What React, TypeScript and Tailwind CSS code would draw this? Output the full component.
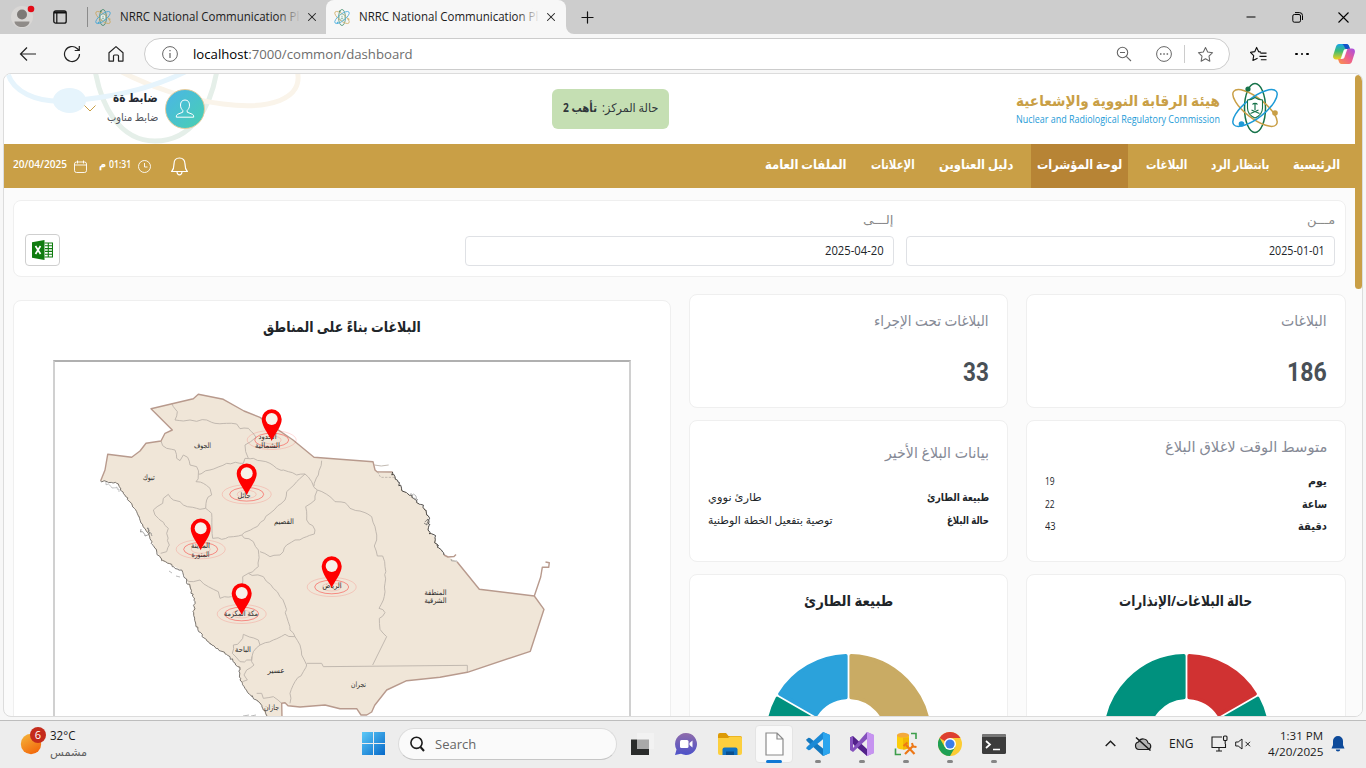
import { useLayoutEffect, useRef, type ReactNode } from "react";
import { Minus, X, Plus } from "lucide-react";

/* Text squeezed or stretched horizontally to the width of its box. */
function Fit({ className, children, rtl = true }: { className: string; children: ReactNode; rtl?: boolean }) {
  const box = useRef<HTMLSpanElement>(null);
  const inner = useRef<HTMLSpanElement>(null);
  useLayoutEffect(() => {
    if (box.current && inner.current) {
      inner.current.style.transform = `scaleX(${box.current.offsetWidth / inner.current.offsetWidth})`;
    }
  }, []);
  return (
    <span ref={box} dir={rtl ? "rtl" : "ltr"} className={`block shrink-0 whitespace-nowrap ${className}`}>
      <span ref={inner} className={rtl ? "inline-block origin-right" : "inline-block origin-left"}>
        {children}
      </span>
    </span>
  );
}

function Atom({ className, thick = false }: { className: string; thick?: boolean }) {
  const w = thick ? 2.6 : 1.5;
  return (
    <svg viewBox="0 0 48 52" className={className} fill="none">
      <ellipse cx="24" cy="26" rx="10.5" ry="24.5" stroke="#17734a" strokeWidth={w} />
      <ellipse cx="24" cy="26" rx="27" ry="10" transform="rotate(38 24 26)" stroke="#c99f46" strokeWidth={w} />
      <ellipse cx="24" cy="26" rx="27" ry="10" transform="rotate(-38 24 26)" stroke="#1e9bd7" strokeWidth={w} />
      <path d="M24 15.500c2.500 1.800 5 2.500 7.500 2.500v8c0 5-3 8-7.500 10-4.500-2-7.500-5-7.500-10v-8c2.500 0 5-.7 7.500-2.500Z" fill="#fff" stroke="#17734a" strokeWidth="1.100" />
      <path d="M24 21v7M21.500 22.500c1-1.500 4-1.500 5 0M19.500 31.500l8-3.500M28.500 31.500l-8-3.500" stroke="#17734a" strokeWidth="1.200" />
      <circle cx="17" cy="7" r="2.600" fill="#17734a" />
      <circle cx="44" cy="31" r="2.800" fill="#c99f46" />
      <circle cx="10.500" cy="42" r="2.800" fill="#1e9bd7" />
    </svg>
  );
}

function TabTitle({ active = false }: { active?: boolean }) {
  return (
    <span className="relative h-5 w-[181px] shrink-0 overflow-hidden text-[12px] leading-5 text-[#1b1b1b]">
      <Fit rtl={false} className="w-[179px]">NRRC National Communication Pl</Fit>
      <span className={`absolute inset-y-0 right-0 w-6 bg-gradient-to-r from-transparent ${active ? "to-[#f7f7f7]" : "to-[#cdcdcd]"}`} />
    </span>
  );
}

function TabBar() {
  return (
    <div className="flex h-[34px] bg-[#cdcdcd]">
      <div className="flex w-[87px] items-center">
        <div className="ml-[11px] grid h-[22px] w-[22px] place-items-center rounded-full bg-[#d9d7d5]">
          <svg viewBox="0 0 22 22" className="h-[22px] w-[22px] overflow-visible">
            <circle cx="11" cy="8.500" r="5" fill="#7d7976" />
            <path d="M3.500 15.500h15c0 3.500-3.500 5.500-7.500 5.500s-7.500-2-7.500-5.500Z" fill="#8f8b88" />
            <circle cx="20" cy="3" r="3.300" fill="#e30b17" />
          </svg>
        </div>
        <svg viewBox="0 0 14 14" className="ml-5 h-[14px] w-[14px]" fill="none" stroke="#111" strokeWidth="1.300">
          <rect x=".8" y=".8" width="12.400" height="12.400" rx="2" />
          <path d="M1 2.400h12" strokeWidth="2.200" />
          <path d="M3.800 3v10" strokeWidth="1.200" />
        </svg>
      </div>
      <div className="flex w-[239px] items-center">
        <div className="h-5 w-px bg-[#8b8b8b]" />
        <Atom thick className="ml-[7px] h-[17px] w-4 opacity-75" />
        <div className="w-[9px]" />
        <TabTitle />
        <X className="ml-[4px] h-[14px] w-[14px] text-[#222]" strokeWidth={1.8} />
      </div>
      <div className="flex w-[240px] items-center rounded-t-lg bg-[#f7f7f7]">
        <Atom thick className="ml-2 h-[17px] w-4 opacity-75" />
        <div className="w-[9px]" />
        <TabTitle active />
        <X className="ml-[4px] h-[14px] w-[14px] text-[#222]" strokeWidth={1.8} />
      </div>
      <div className="flex flex-1 items-center bg-[#f7f7f7]">
        <div className="flex h-full flex-1 items-center rounded-bl-lg bg-[#cdcdcd] pl-[12px]">
          <Plus className="h-[19px] w-[19px] text-[#111]" strokeWidth={1.5} />
          <div className="flex-1" />
          <div className="flex w-[46px] justify-center"><Minus className="h-[14px] w-[14px] text-black" strokeWidth={1.7} /></div>
          <div className="flex w-[46px] justify-center">
            <svg viewBox="0 0 11 11" className="h-[11px] w-[11px]" fill="none" stroke="#000" strokeWidth="1">
              <rect x=".8" y="2.500" width="7.700" height="7.700" rx="1.500" />
              <path d="M3 .6h4.500a3 3 0 0 1 3 3V8" />
            </svg>
          </div>
          <div className="flex w-[46px] justify-center">
            <svg viewBox="0 0 11 11" className="h-[11px] w-[11px]" stroke="#000" strokeWidth="1.100"><path d="M.5.500l10 10M10.500.500l-10 10" /></svg>
          </div>
        </div>
      </div>
    </div>
  );
}

const STAR = "M9 1.500l2.300 4.900 5.200.7-3.800 3.700.9 5.300L9 13.500l-4.600 2.600.9-5.300L1.500 7.100l5.200-.7L9 1.500Z";

function Toolbar() {
  return (
    <div className="flex h-[39px] items-center bg-[#f7f7f7] pr-[2px] pl-[6px] pt-[1px]">
      <div className="flex w-11 justify-center">
        <svg viewBox="0 0 18 18" className="h-[18px] w-[18px]" fill="none" stroke="#222" strokeWidth="1.200"><path d="M17 9H1.500M8 2.500 1.500 9 8 15.500" /></svg>
      </div>
      <div className="flex w-11 justify-center">
        <svg viewBox="0 0 18 18" className="h-[18px] w-[18px]" fill="none" stroke="#222" strokeWidth="1.200"><path d="M16.500 9a7.500 7.500 0 1 1-2.400-5.500l1.900 1.800M16.300 1v4.500h-4.600" /></svg>
      </div>
      <div className="flex w-11 justify-center">
        <svg viewBox="0 0 18 18" className="h-[18px] w-[18px]" fill="none" stroke="#222" strokeWidth="1.200" strokeLinejoin="round"><path d="M2 7.800 9 1.600l7 6.200v8.300h-4.500V11a1 1 0 0 0-1-1h-3a1 1 0 0 0-1 1v5.100H2Z" /></svg>
      </div>
      <div className="mx-[6px] flex h-8 flex-1 items-center rounded-full border border-[#cccccc] bg-white pr-[15px] pl-[17px]">
        <svg viewBox="0 0 16 16" className="h-4 w-4" fill="none" stroke="#666" strokeWidth="1"><circle cx="8" cy="8" r="7.400" /><path d="M8 7v5M8 4v1.300" strokeWidth="1.200" /></svg>
        <Fit rtl={false} className="ml-[15px] w-[220px] text-[13px] leading-5 text-[#6d6d6d]"><span className="text-black">localhost</span>:7000/common/dashboard</Fit>
        <div className="flex-1" />
        <svg viewBox="0 0 16 16" className="h-4 w-4" fill="none" stroke="#666" strokeWidth="1.100"><circle cx="6.500" cy="6.500" r="5.200" /><path d="M4 6.500h5M10.300 10.300 15 15" /></svg>
        <svg viewBox="0 0 16 16" className="ml-6 h-4 w-4" fill="none" stroke="#666" strokeWidth="1"><circle cx="8" cy="8" r="7.400" /><path d="M4 8h1.500M7.300 8h1.500M10.600 8h1.500" strokeWidth="1.500" /></svg>
        <div className="mx-3 h-[18px] w-px bg-[#ccc]" />
        <svg viewBox="0 0 18 18" className="h-[17px] w-[17px]" fill="none" stroke="#666" strokeWidth="1.100" strokeLinejoin="round"><path d={STAR} /></svg>
      </div>
      <div className="flex w-11 justify-center">
        <svg viewBox="0 0 18 18" className="h-[17px] w-[17px]" fill="none" stroke="#111" strokeWidth="1.200" strokeLinejoin="round"><path d="M11.500 6.500 9.200 6 7 1.500 5 6l-4.500.8 3.400 3.500-.8 5L8 12.900M11 7.500h6.500M10 11h7.500M11.500 14.500h6" /></svg>
      </div>
      <div className="flex w-11 justify-center gap-[3px]">
        <i className="h-[2.500px] w-[2.500px] rounded-full bg-black" /><i className="h-[2.500px] w-[2.500px] rounded-full bg-black" /><i className="h-[2.500px] w-[2.500px] rounded-full bg-black" />
      </div>
      <div className="flex w-10 justify-center">
        <svg viewBox="0 0 22 20" className="h-5 w-[22px]">
          <defs>
            <linearGradient id="cpA" x1="0" y1="0" x2="0" y2="1"><stop offset="0" stopColor="#19a5ea" /><stop offset=".45" stopColor="#3cbc74" /><stop offset="1" stopColor="#f4cf1c" /></linearGradient>
            <linearGradient id="cpB" x1="1" y1="0" x2="0" y2="1"><stop offset="0" stopColor="#a44fe8" /><stop offset=".5" stopColor="#ee5f8c" /><stop offset="1" stopColor="#fb9646" /></linearGradient>
          </defs>
          <path d="M6 0h7.500c1.500 0 2.200 1 2.700 2.500L17 5h-4c-1.500 0-2.200.7-2.700 2.200L8 14c-.4 1-1 1.500-2 1.500H3C.5 15.500-.4 13.500.3 11L3 2.500C3.500 1 4.500 0 6 0Z" fill="url(#cpA)" />
          <path d="M9 0h4.500c1.500 0 2.200 1 2.700 2.500L17 5h-4C11.500 4.500 11 0 9 0Z" fill="#1552c8" />
          <path d="M16 20H8.500C7 20 6.300 19 5.800 17.500L5 15h4c1.500 0 2.200-.7 2.700-2.200L14 6c.4-1 1-1.500 2-1.500h3c2.500 0 3.400 2 2.700 4.500L19 17.500c-.5 1.500-1.500 2.500-3 2.500Z" fill="url(#cpB)" />
          <path d="m12.200 6-2.700 8" stroke="#fff" strokeWidth="1.200" />
        </svg>
      </div>
    </div>
  );
}

function Header() {
  return (
    <header className="relative flex h-[70px] shrink-0 items-start overflow-hidden bg-white">
      <svg viewBox="4 74 310 70" className="absolute top-0 left-0 h-[70px] w-[310px]" fill="none">
        <path d="M95 70c6 35 24 71 60 71 38 0 56-35 62-71" stroke="#e5efe9" strokeWidth="5" />
        <path d="M118 70c30 16 70 30 105 34 45 6 82-4 74-34" stroke="#faf4ea" strokeWidth="5" />
        <path d="M7 70c4 22 30 33 60 31 45-3 85-12 122-31" stroke="#e6f4fc" strokeWidth="5" />
        <ellipse cx="69.500" cy="100.500" rx="16.500" ry="12.500" fill="#e6f4fc" />
      </svg>
      <div className="relative flex w-full items-start">
        <svg viewBox="0 0 12 7" className="mt-[31px] ml-20 h-[7px] w-3" fill="none" stroke="#c99f46"><path d="m.5.500 5.500 5.500L11.500.500" /></svg>
        <div className="mt-[15px] ml-[7px] flex w-[55px] flex-col items-end">
          <Fit className="w-[45px] text-[12px] leading-[18px] font-bold text-[#262a33]">ضابط ةة</Fit>
          <Fit className="w-[51px] text-[11px] leading-[20px] text-[#50545c]">ضابط مناوب</Fit>
        </div>
        <div className="mt-[15px] ml-[7px] grid h-[40px] w-[40px] place-items-center rounded-full border border-[#e0cb9d] bg-gradient-to-br from-[#4cb5e6] to-[#49cfb0]">
          <svg viewBox="0 0 20 20" className="h-5 w-5" fill="none" stroke="#fff" strokeWidth="1"><path d="M10 1c3 0 4.500 2.200 4.500 5s-1 4-2.300 5.400v1.800l5 2c1 .4 1.500 1.200 1.500 3H1.300c0-1.800.5-2.600 1.500-3l5-2v-1.800C6.500 10 5.500 8.800 5.500 6S7 1 10 1Z" /></svg>
        </div>
        <div className="mt-[15px] ml-[347px] flex h-10 w-[117px] items-center justify-center gap-[5px] rounded-md bg-[#c5dfb3] pb-[2px] text-[12px] leading-5 text-[#30363a]" dir="rtl">
          <Fit className="w-[56px]">حالة المركز:</Fit>
          <Fit className="w-[34px] font-bold">تأهب 2</Fit>
        </div>
        <div className="mt-[13px] ml-[347px]">
          <Fit className="w-[204px] text-[15px] leading-[26px] font-bold text-[#c99f46]">هيئة الرقابة النووية والإشعاعية</Fit>
          <Fit rtl={false} className="w-[204px] text-[10px] leading-[12px] text-[#1e9bd7]">Nuclear and Radiological Regulatory Commission</Fit>
        </div>
        <Atom className="mt-2 ml-[11px] h-[52px] w-12 shrink-0" />
      </div>
    </header>
  );
}

function Nav() {
  const item = "flex h-full items-center px-[6px] pb-[5px]";
  return (
    <nav dir="rtl" className="flex h-11 shrink-0 items-center gap-3 bg-[#c99f46] pr-[9px] pl-[9px] text-[13px] leading-6 font-semibold text-white">
      <a className={item}><Fit className="w-[47px]">الرئيسية</Fit></a>
      <a className={item}><Fit className="w-[58px]">بانتظار الرد</Fit></a>
      <a className={item}><Fit className="w-[41px]">البلاغات</Fit></a>
      <a className={`${item} bg-[#b78435]`}><Fit className="w-[85px]">لوحة المؤشرات</Fit></a>
      <a className={item}><Fit className="w-[74px]">دليل العناوين</Fit></a>
      <a className={item}><Fit className="w-[44px]">الإعلانات</Fit></a>
      <a className={item}><Fit className="w-[82px]">الملفات العامة</Fit></a>
      <div className="flex-1" />
      <div dir="ltr" className="flex items-center text-[11px] leading-5">
        <Fit rtl={false} className="mb-1 w-[54px]">20/04/2025</Fit>
        <svg viewBox="0 0 13 13" className="ml-[7px] h-[13px] w-[13px]" fill="none" stroke="#fff" strokeWidth=".9"><rect x=".5" y="2" width="12" height="10.500" rx="2" /><path d="M.5 5h12M3.500.500v3M9.500.500v3" /></svg>
        <span className="mb-1 ml-3 flex items-center gap-[3px]">
          <Fit className="w-[7px]">م</Fit>
          <Fit rtl={false} className="w-[22px]">01:31</Fit>
        </span>
        <svg viewBox="0 0 13 13" className="ml-[7px] h-[13px] w-[13px]" fill="none" stroke="#fff" strokeWidth=".9"><circle cx="6.500" cy="6.500" r="6" /><path d="M6.500 3v4H9.500" /></svg>
        <svg viewBox="0 0 17 19" className="ml-[20px] h-[19px] w-[17px]" fill="none" stroke="#fff" strokeWidth="1.200"><path d="M8.500 1C5 1 3 3.500 3 7c0 4-.5 5.500-2.300 7.500h15.600C14.500 12.500 14 11 14 7c0-3.500-2-6-5.500-6ZM6 15c.2 1.800 1 2.800 2.500 2.800S10.800 16.800 11 15" /></svg>
      </div>
    </nav>
  );
}

function Filters() {
  return (
    <section dir="rtl" className="mx-[9px] mt-3 flex h-[77px] shrink-0 rounded-lg border border-[#efefef] bg-white px-[10px] text-[12px]">
      <div className="mt-[9px]">
        <Fit className="w-7 leading-5 text-[#8a8a8a]">مـــن</Fit>
        <div className="mt-[6px] flex h-[30px] w-[429px] items-center rounded-[4px] border border-[#dfe1e5] px-[9px] pb-[1px] text-[#212529]">
          <Fit rtl={false} className="w-[56px]">2025-01-01</Fit>
        </div>
      </div>
      <div className="mt-[9px] mr-3">
        <Fit className="w-[31px] leading-5 text-[#8a8a8a]">إلـــى</Fit>
        <div className="mt-[6px] flex h-[30px] w-[429px] items-center rounded-[4px] border border-[#dfe1e5] px-[9px] pb-[1px] text-[#212529]">
          <Fit rtl={false} className="w-[59px]">2025-04-20</Fit>
        </div>
      </div>
      <div className="flex-1" />
      <button className="mt-[33px] ml-[1px] grid h-8 w-[35px] place-items-center rounded-[4px] border border-[#cfcfcf] bg-white">
        <svg viewBox="0 0 21 20" className="h-5 w-[21px]">
          <path d="M0 2.200 12.500 0v20L0 17.800Z" fill="#107c10" />
          <path d="m3.500 6 5 8M8.500 6l-5 8" stroke="#fff" strokeWidth="1.700" />
          <path d="M12.500 3h8v14h-8M13 5.800h7M13 8.600h7M13 11.400h7M13 14.200h7M16.300 3v14" fill="none" stroke="#107c10" strokeWidth="1.100" />
        </svg>
      </button>
    </section>
  );
}

type Pt = [number, number];

function rough(src: string, amp: number, step = 14) {
  const pts: Pt[] = src.split(" ").map((p) => p.split(",").map(Number) as Pt);
  let seed = 7;
  const rnd = () => {
    seed = (seed * 16807) % 2147483647;
    return seed / 2147483647 - 0.5;
  };
  let d = `M${pts[0][0]} ${pts[0][1]}`;
  for (let i = 1; i < pts.length; i++) {
    const [ax, ay] = pts[i - 1];
    const [bx, by] = pts[i];
    const n = Math.max(1, Math.round(Math.hypot(bx - ax, by - ay) / step));
    for (let k = 1; k <= n; k++) {
      const t = k / n;
      const j = k === n ? 0 : amp;
      d += `L${(ax + (bx - ax) * t + rnd() * j).toFixed(1)} ${(ay + (by - ay) * t + rnd() * j).toFixed(1)}`;
    }
  }
  return d;
}

const LAND =
  "M198.300 394.300 223.300 399.300 244 411 260 417.300 293 440 314 457.300 340 459.300 373 461.700 375 470 377 471.700 392.700 472 395 476.700 401.700 490 410 495 416.700 502 426 510 428.700 520 428 530 435 537.700 436.700 545 444 555 448 557 457 561.700 479.300 589.300 534.300 596 544 609.300 530.300 651.300 467.300 672.300 440 677.300 406.700 680.700 386.700 690 374.700 705.300 371.700 712 366.700 715 361 715 356.700 708.700 340 708.700 325 705 300 707 288 705.700 285 702.700 281.700 703.300 282 718 267 718 263.300 710 260 703 248 693 240 680 240 670 235 663 230 656.700 213 645.700 206.700 640.700 196 626.700 193 611.700 195 601.700 186.700 580 181.700 570 161.700 560.700 155 548.300 146.700 531.700 143 526.700 136.700 511.700 123.300 493.300 116.700 483.300 100.700 480.700 105 470 107.700 454.300 131.700 457.300 140 451 146 443.300 161 441 165 433.300 172.300 430 151 408.700 193.300 398.700Z";

const NORTH = [
  "395,190 400,200 412,215 405,240 430,243 450,240 470,244 500,240 525,250 560,250 590,252 600,266 625,265 640,280 648,292 632,305 615,315 617,335 625,355",
  "363,303 380,325 405,330 410,355 420,362 430,345 443,352 450,375 470,380 475,403 468,425 490,430 510,445 515,465 500,480 497,505 515,520 518,595",
  "475,403 510,390 560,370 610,370 615,355 640,355 660,362 690,370 710,385 745,395 770,405 795,402 815,425 822,442 832,450 870,470 885,485 915,488 930,505 960,513",
  "822,438 835,405 845,362",
  "795,402 770,425 740,455 735,480 690,520 640,565 605,585 580,590 545,598 518,595",
  "497,505 470,505 430,495 420,485 400,480 385,463 370,475 368,490 340,510 345,525 360,540 385,565 380,580 388,615 380,635 362,640",
  "832,450 825,480 797,500 800,540 825,570 823,582 800,590 765,600 740,615 720,645 690,650 660,635",
];
const SOUTH = [
  "605,15 640,35 655,60 655,110 625,130 608,140 607,165",
  "625,130 670,140 700,175 720,200 735,225 740,260 750,300 765,320 780,345 785,375 800,405 790,425 765,455 750,490 750,520",
  "440,148 460,155 480,150 505,170 535,185 540,205 575,200",
  "765,320 735,313 700,330 660,345 655,330 610,313 600,335 580,345 577,370 600,395 635,390 640,365 660,345",
  "635,380 642,405 620,420 612,435 622,450 607,455",
  "650,490 665,490 670,505 700,500 725,520",
];
const EAST =
  "960,513 975,518 995,530 1005,560 1010,600 1003,618 1012,648 1028,648 1035,680 1035,730 1030,780 1017,805 1035,818 1018,835 1020,868 1040,890";

const WEST_COAST =
  "100.7,480.7 116.7,483.3 123.3,493.3 136.7,511.7 143,526.7 146.7,531.7 155,548.3 161.7,560.7 181.7,570 186.7,580 195,601.7 193,611.7 196,626.7 206.7,640.7 213,645.7 230,656.7 235,663 240,670 240,680 248,693 260,703 263.3,710 267,716";
const EAST_COAST =
  "392.7,472 395,476.7 401.7,490 410,495 416.7,502 426,510 428.7,520 428,530 435,537.7 436.7,545 444,555";
const LAND_BORDER =
  "M100.700 480.700 105 470 107.700 454.300 131.700 457.300 140 451 146 443.300 161 441 165 433.300 172.300 430 151 408.700 193.300 398.700 198.300 394.300 223.300 399.300 244 411 260 417.300 293 440 314 457.300 340 459.300 373 461.700 375 470 377 471.700 392.700 472M444 555 448 557 454 556.500 456 554.500M457 561.700 479.300 589.300 534.300 596 544 609.300 530.300 651.300 467.300 672.300 440 677.300 406.700 680.700 386.700 690 374.700 705.300 371.700 712 366.700 715 361 715 356.700 708.700 340 708.700 325 705 300 707 288 705.700 285 702.700 281.700 703.300 282 718M534.300 596 540.700 577 542.300 567.300 548.700 567.300 549.300 562.700 545.500 562";

const LABELS: [string, number, number, number][] = [
  ["الجوف", 202.500, 447.500, 17],
  ["تبوك", 148.700, 479.500, 12],
  ["القصيم", 284, 523.500, 20],
  ["حائل", 244, 497.500, 13],
  ["الحدود", 267.500, 438.500, 18],
  ["الشمالية", 267.500, 447.500, 25],
  ["المدينة", 200.500, 548, 19],
  ["المنورة", 200.500, 556.500, 18],
  ["الرياض", 332, 588, 19],
  ["مكة المكرمة", 241, 615.500, 34],
  ["الباحة", 243, 651.500, 16],
  ["عسير", 276, 672.500, 17],
  ["جازان", 271.500, 709.500, 15],
  ["نجران", 358.500, 687, 15],
  ["المنطقة", 435.500, 595, 22],
  ["الشرقية", 435.500, 603, 22],
];

const PINS: Pt[] = [[271.700, 440], [246.700, 494.300], [200.700, 549.300], [331.700, 587], [241.700, 614]];

function RegionsMap() {
  return (
    <svg viewBox="55 362 574 355" className="h-[355px] w-[574px]" fill="none">
      <path d={LAND} fill="#f0e6d8" />
      <g stroke="#bdb5ac" strokeWidth="2.800" transform="translate(40 340) scale(.33333)">
        {NORTH.map((s, i) => <path key={i} d={rough(s, 7)} />)}
        <g transform="translate(0 570)">{SOUTH.map((s, i) => <path key={i} d={rough(s, 7)} />)}</g>
        <path d="M800 970H845L850 980 1282 976V997" />
        <path d={rough(EAST, 6)} />
        <path d="M1040 890 998 975" />
        <path d="M1012 395 1022 412H1065" strokeDasharray="7 4" />
        <path d="M1003 375q20 6 43 0" />
      </g>
      <path d={LAND_BORDER} stroke="#b89a8d" strokeWidth="1.400" strokeLinejoin="round" />
      <path d={rough(WEST_COAST, 2.4, 2)} stroke="#6d6862" strokeWidth=".9" />
      <path d={rough(EAST_COAST, 3.4, 1.800)} stroke="#4a4642" strokeWidth="1" />
      <path d={rough("106,482 112,488 117,487 119,492", 3, 2)} stroke="#aaa" strokeWidth=".7" />
      <path d={rough("141,529 145,536 150,533 147,528 152,536", 3, 2)} stroke="#777" strokeWidth=".7" />
      <path d="M169 571l3 2M176 576l4 1M243 716l6-1M251 716l5-1" stroke="#bbb" />
      <path d={rough("411,493 416,496 418,500 414,498", 3, 2)} stroke="#999" strokeWidth=".7" />
      <path d={rough("425,522 428,519 427,525 424,523", 2, 2)} stroke="#555" strokeWidth=".7" />
      <path d={rough("451,559 454,561 457,561", 2, 2)} stroke="#888" strokeWidth=".7" />
      {PINS.map(([x, y]) => (
        <g key={x} fill="none">
          <ellipse cx={x} cy={y} rx="24.500" ry="9.500" stroke="#ff0000" strokeOpacity=".14" />
          <ellipse cx={x} cy={y} rx="17" ry="6.800" stroke="#ff0000" strokeOpacity=".4" />
          <ellipse cx={x} cy={y} rx="9.500" ry="4" stroke="#ff0000" strokeOpacity=".14" />
        </g>
      ))}
      <g fill="#2b2b2b" fontSize="7.500" textAnchor="middle" direction="rtl" className="font-['DejaVu_Sans',sans-serif]">
        {LABELS.map(([t, x, y, w]) => <text key={t} x={x} y={y} textLength={w} lengthAdjust="spacingAndGlyphs">{t}</text>)}
      </g>
      {PINS.map(([x, y]) => (
        <g key={x} transform={`translate(${x} ${y})`}>
          <path d="M0 1C-2.500-5.500-10-13.500-10-20.800a10 10 0 0 1 20 0C10-13.500 2.500-5.500 0 1Z" fill="#f00" />
          <circle cy="-21" r="6" fill="#f7f1e9" />
        </g>
      ))}
    </svg>
  );
}

function sector(from: number, to: number) {
  const R = 82.200;
  const r = 39.800;
  const gap = 2.700;
  const at = (rad: number, deg: number, side: number) => {
    const a = (deg * Math.PI) / 180 + side * Math.asin(gap / rad);
    return `${(84 + rad * Math.sin(a)).toFixed(2)} ${(84 - rad * Math.cos(a)).toFixed(2)}`;
  };
  const big = to - from > 180 ? 1 : 0;
  return `M${at(R, from, 1)}A${R} ${R} 0 ${big} 1 ${at(R, to, -1)}L${at(r, to, -1)}A${r} ${r} 0 ${big} 0 ${at(r, from, 1)}Z`;
}

function Donut({ slices }: { slices: [number, number, string][] }) {
  return (
    <svg viewBox="0 0 168 168" className="h-[165px] w-[165px] shrink-0">
      {slices.map(([a, b, c]) => <path key={a} d={sector(a, b)} fill={c} stroke={c} strokeWidth="3.600" strokeLinejoin="round" />)}
    </svg>
  );
}

const CARD = "rounded-lg border border-[#efefef] bg-white";
const CARD_TITLE = "text-[15px] leading-6 text-[#868a96]";

function Row({ label, value }: { label: ReactNode; value: ReactNode }) {
  return <div className="flex h-[22.500px] items-center justify-between text-[11px] leading-5 text-[#212529]">{label}{value}</div>;
}

function Dashboard() {
  return (
    <main dir="rtl" className="flex min-h-0 flex-1 items-start overflow-hidden px-[9px] pt-[17px]">
      <div className="flex w-[320px] shrink-0 flex-col gap-3">
        <div className={`${CARD} h-[114px] px-[18px] pt-[13px]`}>
          <Fit className={`w-[46px] ${CARD_TITLE}`}>البلاغات</Fit>
          <Fit className="mt-[20px] w-[40px] font-['Roboto',sans-serif] text-[26px] leading-10 font-bold text-[#495057]">186</Fit>
        </div>
        <div className={`${CARD} h-[142px] px-[18px] pt-[13px]`}>
          <Fit className={`mb-[12px] w-[162px] ${CARD_TITLE}`}>متوسط الوقت لاغلاق البلاغ</Fit>
          <Row label={<Fit className="w-[19px] font-bold">يوم</Fit>} value={<Fit rtl={false} className="w-[10px]">19</Fit>} />
          <Row label={<Fit className="w-[25px] font-bold">ساعة</Fit>} value={<Fit rtl={false} className="w-[10px]">22</Fit>} />
          <Row label={<Fit className="w-[29px] font-bold">دقيقة</Fit>} value={<Fit rtl={false} className="w-[11px]">43</Fit>} />
        </div>
        <div className={`${CARD} flex h-[300px] flex-col items-center pt-[13px]`}>
          <Fit className="w-[133px] text-[15px] leading-6 font-bold text-[#212529]">حالة البلاغات/الإنذارات</Fit>
          <div className="mt-[41.500px]"><Donut slices={[[0, 60, "#d03232"], [60, 180, "#00917e"], [180, 360, "#00917e"]]} /></div>
        </div>
      </div>
      <div className="mr-[18px] flex w-[319px] shrink-0 flex-col gap-3">
        <div className={`${CARD} h-[114px] px-[18px] pt-[13px]`}>
          <Fit className={`w-[115px] ${CARD_TITLE}`}>البلاغات تحت الإجراء</Fit>
          <Fit className="mt-[20px] w-[26px] font-['Roboto',sans-serif] text-[26px] leading-10 font-bold text-[#495057]">33</Fit>
        </div>
        <div className={`${CARD} h-[142px] px-[18px] pt-[19px]`}>
          <Fit className={`mb-[22px] w-[104px] ${CARD_TITLE}`}>بيانات البلاغ الأخير</Fit>
          <Row label={<Fit className="w-[62px] font-bold">طبيعة الطارئ</Fit>} value={<Fit className="w-[54px]">طارئ نووي</Fit>} />
          <Row label={<Fit className="w-[42px] font-bold">حالة البلاغ</Fit>} value={<Fit className="w-[125px]">توصية بتفعيل الخطة الوطنية</Fit>} />
        </div>
        <div className={`${CARD} flex h-[300px] flex-col items-center pt-[13px]`}>
          <Fit className="w-[89px] text-[15px] leading-6 font-bold text-[#212529]">طبيعة الطارئ</Fit>
          <div className="mt-[41.500px] mr-px"><Donut slices={[[0, 180, "#c9ab64"], [180, 300, "#00917e"], [300, 360, "#2ba2db"]]} /></div>
        </div>
      </div>
      <div className={`${CARD} mt-[6px] mr-[18px] flex h-[600px] w-[658px] shrink-0 flex-col items-center pt-[13px]`}>
        <Fit className="w-[158px] text-[15px] leading-6 font-bold text-[#212529]">البلاغات بناءً على المناطق</Fit>
        <div className="mt-[22px] w-[578px] border-x-2 border-t-2 border-x-[#d0d0d0] border-t-[#b0b0b0]">
          <RegionsMap />
        </div>
      </div>
    </main>
  );
}

function Running() {
  return <i className="absolute bottom-[3px] left-1/2 h-[3px] w-[6px] -translate-x-1/2 rounded-full bg-[#868686]" />;
}

function Taskbar() {
  const slot = "relative flex h-full w-11 shrink-0 items-center justify-center";
  return (
    <footer className="flex h-12 items-center border-t border-[#bdbdbd] bg-[#ededed] pb-[2px]">
      <div className="flex w-[352px] items-center pl-5">
        <svg viewBox="0 0 26 28" className="h-7 w-[26px] overflow-visible">
          <defs><linearGradient id="sun" x1="0" y1="0" x2=".6" y2="1"><stop stopColor="#f5b83d" /><stop offset="1" stopColor="#f26a0c" /></linearGradient></defs>
          <circle cx="11" cy="14" r="10.200" fill="url(#sun)" />
          <circle cx="18" cy="5" r="8" fill="#c42b1c" />
          <text x="18" y="9" textAnchor="middle" fontSize="11" fill="#fff">6</text>
        </svg>
        <div className="ml-1 text-[12px] text-[#1b1b1b]">
          <Fit rtl={false} className="w-[25px] leading-4">32°C</Fit>
          <Fit className="w-[37px] text-[11px] leading-4 text-[#5f5f5f]">مشمس</Fit>
        </div>
      </div>
      <div className="flex w-[47px] justify-center pr-[4px]">
        <svg viewBox="0 0 23 23" className="h-[23px] w-[23px]">
          <defs><linearGradient id="win" x1="0" y1="0" x2="1" y2="1"><stop stopColor="#5cc9f7" /><stop offset="1" stopColor="#0669c9" /></linearGradient></defs>
          <path d="M0 0h11v11H0ZM12 0h11v11H12ZM0 12h11v11H0ZM12 12h11v11H12Z" fill="url(#win)" />
        </svg>
      </div>
      <div className="mr-[3px] -ml-px flex h-8 w-[219px] items-center rounded-full border border-[#dcdcdc] border-b-[#c6c6c6] bg-[#fafafa] pl-[10px]">
        <svg viewBox="0 0 16 16" className="h-4 w-4" fill="none" stroke="#1b1b1b" strokeWidth="1.600"><circle cx="7.500" cy="6.800" r="5.600" /><path d="m11.500 11 3.500 4" strokeWidth="2" /></svg>
        <Fit rtl={false} className="ml-[10px] w-[41px] text-[13px] leading-5 text-[#666]">Search</Fit>
      </div>
      <div className={slot}>
        <svg viewBox="0 0 24 24" className="h-6 w-6"><path d="M1 7.500h18V23H1Z" fill="#2a2c2b" /><path d="M7 1h17v16H7Z" fill="#f2f2f2" /><path d="M7 7.500h12V17H7Z" fill="#a9a9a9" /></svg>
      </div>
      <div className={slot}>
        <svg viewBox="0 0 24 24" className="h-6 w-6">
          <defs><linearGradient id="chat" x1="0" y1="0" x2="0" y2="1"><stop stopColor="#8f6cab" /><stop offset="1" stopColor="#4d52c9" /></linearGradient></defs>
          <path d="M12 1a11 11 0 1 1-5 20.800L1 23l1.500-5.500A11 11 0 0 1 12 1Z" fill="url(#chat)" />
          <rect x="6" y="8" width="8.500" height="8" rx="1.500" fill="#fff" /><path d="m15.500 11 3-2.500v7l-3-2.500Z" fill="#fff" />
        </svg>
      </div>
      <div className={slot}>
        <svg viewBox="0 0 24 22" className="h-[22px] w-6"><path d="M0 2a2 2 0 0 1 2-2h6l2.500 3H22a2 2 0 0 1 2 2v3H0Z" fill="#dd9a06" /><path d="M0 5h10l2-1.500h10a2 2 0 0 1 2 2V20a2 2 0 0 1-2 2H2a2 2 0 0 1-2-2Z" fill="#fccf3e" /><path d="M4.500 22v-5.500a2 2 0 0 1 2-2h11a2 2 0 0 1 2 2V22Z" fill="#1173c2" /><path d="M8 18.500h8V22H8Z" fill="#0a4f8e" /></svg>
      </div>
      <div className={slot}>
        <div className="grid h-[38px] w-[38px] place-items-center rounded-[4px] border border-[#e4e4e4] bg-[#f9f9f9]">
          <svg viewBox="0 0 19 24" className="h-6 w-[19px]" fill="#fff" stroke="#8a8a8a" strokeWidth="1.200"><path d="M1 1h11l6 6v16H1ZM12 1v6h6" /></svg>
        </div>
        <i className="absolute bottom-[3px] left-1/2 h-[3px] w-4 -translate-x-1/2 rounded-full bg-[#0f78d4]" />
      </div>
      <div className={slot}>
        <svg viewBox="0 0 24 24" className="h-6 w-6"><path d="m17 0 7 3v18l-7 3L1 9.200 0 7.800l2.500-2L4 6l13 10.500Z" fill="#1478be" /><path d="M17 0v7.300L4 18l-1.500.200-2.500-2 1-1.400Z" fill="#1b8ad6" /><path d="m17 0 7 3v18l-7 3Z" fill="#2ba5ee" /></svg>
        <Running />
      </div>
      <div className={slot}>
        <svg viewBox="0 0 24 24" className="h-6 w-6"><path d="m17 0 7 3v18l-7 3L4 9.500v5.200l3-2.700L17 20Z" fill="#a876e0" /><path d="M0 5.500 3 4l14 13v7L3 12v4l-3 2Z" fill="#52218a" /><path d="M17 0v7L3 20l-3-2V5.500L3 4v12Z" fill="#8552bd" /><path d="m17 0 7 3v18l-7 3Z" fill="#c693f0" /></svg>
        <Running />
      </div>
      <div className={slot}>
        <svg viewBox="0 0 24 24" className="h-6 w-6" fill="none"><path d="M3 3v12c0 1.500 2.500 2.500 6 2.500s6-1 6-2.500V3Z" fill="#fccd0a" /><path d="M9 5.500h6V15c0 1.500-2.500 2.500-6 2.500Z" fill="#f2b705" /><ellipse cx="9" cy="3.200" rx="6" ry="2.400" fill="#f4a93a" /><path d="M17 1.500h5V7M1.500 16.500v6H7" stroke="#3d9e4b" strokeWidth="1.600" /><path d="m11 22 8.500-8.500M12 13l8.500 9" stroke="#ed7817" strokeWidth="2.200" /><path d="m9.500 14 4-3.500M18 11l1 3.500 3.500.5" stroke="#ed7817" strokeWidth="2" /></svg>
        <Running />
      </div>
      <div className={slot}>
        <svg viewBox="0 0 24 24" className="h-6 w-6"><circle cx="12" cy="12" r="12" fill="#fccc33" /><path d="M12 12 1.600 6A12 12 0 0 1 22.400 6H12Z" fill="#dd3f31" /><path d="M1.600 6A12 12 0 0 0 12 24l5.200-9L12 12 6.800 15Z" fill="#1fa055" /><circle cx="12" cy="12" r="6" fill="#fff" /><circle cx="12" cy="12" r="4.600" fill="#3b7de9" /></svg>
        <Running />
      </div>
      <div className={slot}>
        <svg viewBox="0 0 24 20" className="h-5 w-6" fill="none"><rect width="24" height="20" rx="1.500" fill="#3c3c3c" /><path d="M0 1.500A1.500 1.500 0 0 1 1.500 0h21A1.500 1.500 0 0 1 24 1.500V3H0Z" fill="#777" /><path d="m4 7 4 3.500L4 14M11 15.500h7" stroke="#fff" strokeWidth="1.700" /></svg>
        <Running />
      </div>
      <div className="flex-1" />
      <svg viewBox="0 0 11 7" className="h-[7px] w-[11px]" fill="none" stroke="#1b1b1b" strokeWidth="1.400"><path d="m.7 6 4.800-4.800L10.300 6" /></svg>
      <svg viewBox="0 0 18 14" className="ml-[18px] h-[14px] w-[18px]" fill="none" stroke="#1b1b1b" strokeWidth="1.200"><path d="M5 12.500a3.800 3.800 0 0 1-.5-7.500 5 5 0 0 1 9.500 1 3.300 3.300 0 0 1 0 6.500Z" fill="#b5b5b5" /><path d="m2 .500 14.500 13" strokeWidth="1.500" /></svg>
      <Fit rtl={false} className="ml-[17px] w-6 text-[12px] leading-5 text-[#1b1b1b]">ENG</Fit>
      <svg viewBox="0 0 17 17" className="ml-[18px] h-[17px] w-[17px]" fill="none" stroke="#1b1b1b" strokeWidth="1.100"><path d="M11 2H1v10.500h13.500V9M5 16h6M8 12.500V16" /><rect x="12.500" y="1" width="3.500" height="4.500" rx="1" /><path d="M14.200 5.500V9" /></svg>
      <svg viewBox="0 0 16 12" className="ml-[7px] h-3 w-4" fill="none" stroke="#1b1b1b" strokeWidth="1"><path d="M.7 4v4h2.500L7 11V1L3.200 4ZM10.500 3.800l4.500 4.500M15 3.800l-4.500 4.500" /></svg>
      <div className="ml-[16px] flex w-[56px] flex-col items-end text-[11.500px] leading-4 text-[#1b1b1b]">
        <Fit rtl={false} className="w-[43px]">1:31 PM</Fit>
        <Fit rtl={false} className="w-[55px]">4/20/2025</Fit>
      </div>
      <svg viewBox="0 0 14 16" className="mr-[21px] ml-[8px] h-4 w-[14px]" fill="#0d4a9a"><path d="M7 0a5 5 0 0 0-5 5v4L.5 12.500h13L12 9V5a5 5 0 0 0-5-5ZM4.800 13.500h4.400a2.200 2 0 0 1-4.400 0Z" /></svg>
    </footer>
  );
}

export default function App() {
  return (
    <div className="flex h-[768px] w-[1366px] flex-col overflow-hidden bg-[#f7f7f7] font-['Open_Sans','DejaVu_Sans',sans-serif]">
      <TabBar />
      <Toolbar />
      <div className="mx-[3px] mb-[3px] flex h-[644px] overflow-hidden rounded-lg border border-[#dcdcdc] bg-[#fbfbfb]">
        <div className="flex min-w-0 flex-1 flex-col">
          <Header />
          <Nav />
          <Filters />
          <Dashboard />
        </div>
        <div className="w-[7px] shrink-0 bg-[#fbfbfb]"><div className="mt-[1px] h-[214px] rounded-full bg-[#c99f46]" /></div>
      </div>
      <Taskbar />
    </div>
  );
}
